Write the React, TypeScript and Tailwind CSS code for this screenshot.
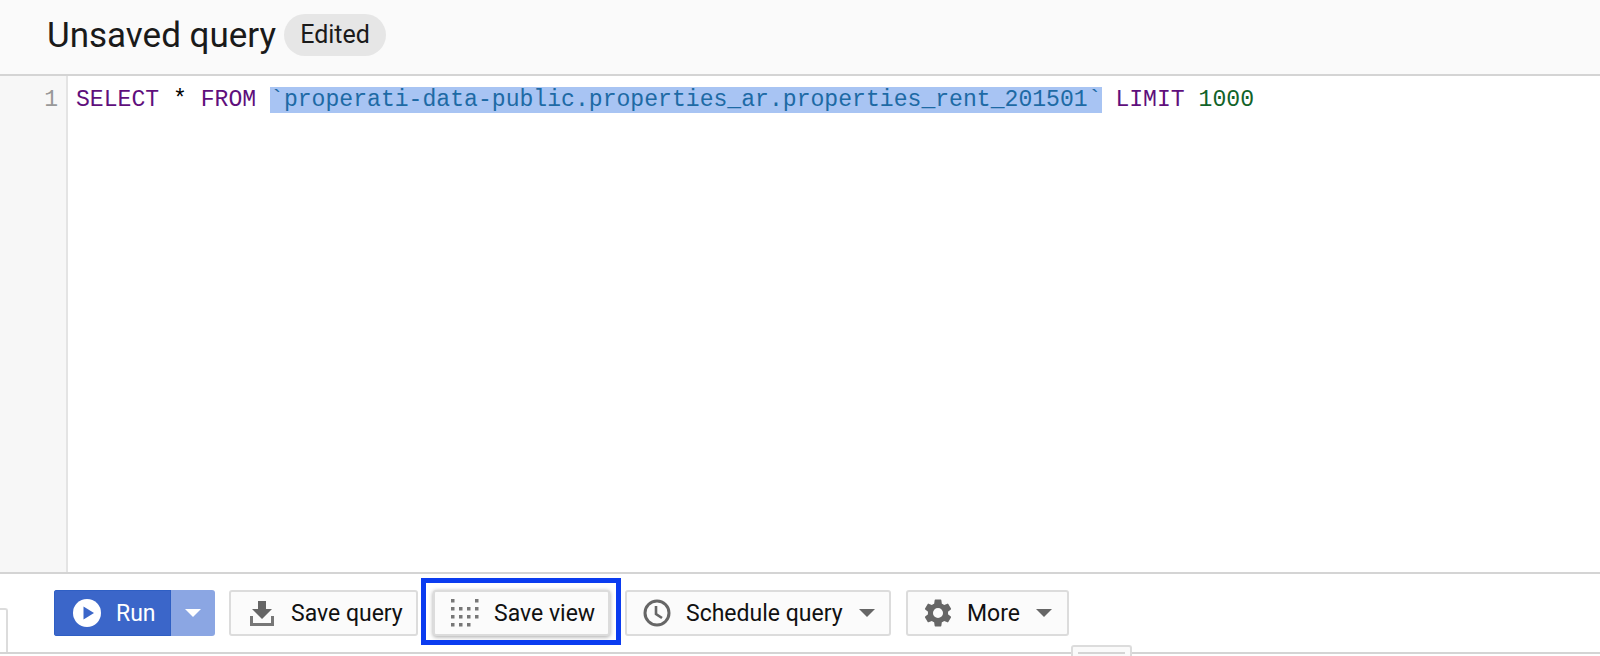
import React from "react";

const Caret = ({ cls }: { cls: string }) => (
  <svg width="16" height="8" viewBox="0 0 16 8" className={cls}>
    <path d="M0 0h16L8 8z" fill="currentColor" />
  </svg>
);

const Btn = ({ w, icon, label, caret, children, tight }: { w: string; icon: React.ReactNode; label: string; caret?: boolean; children?: React.ReactNode; tight?: boolean }) => (
  <div className={`relative flex h-[46px] items-center rounded-[3px] border-2 border-[#dcdcdc] bg-[#fbfbfb] text-[23px] text-[#111] ${tight ? "pl-[16px]" : "pl-[19px]"} ${w}`}>
    {icon}
    <span className={`whitespace-nowrap pt-[2px] ${tight ? "ml-[15px]" : "ml-[16px]"}`}>{label}</span>
    {caret && <Caret cls="ml-[16px] text-[#666]" />}
    {children}
  </div>
);

export default function App() {
  return (
    <div className="flex h-[656px] w-[1600px] flex-col overflow-hidden bg-white font-['Roboto',sans-serif]">
      <header className="flex h-[76px] shrink-0 items-center border-b-2 border-[#d4d4d4] bg-[#fafafa] pb-[4px] pl-[47px]">
        <h1 className="text-[35px] leading-none text-[#1a1a1a]">Unsaved query</h1>
        <span className="ml-[8px] flex h-[42px] w-[102px] items-center justify-center rounded-full bg-[#e6e6e6] text-[25px] text-[#1a1a1a]">Edited</span>
      </header>

      <main className="flex h-[498px] shrink-0 border-b-2 border-[#d4d4d4]">
        <div className="w-[68px] shrink-0 border-r-2 border-[#e4e4e4] bg-[#f7f7f7] pr-[8px] pt-[11px] text-right font-['Liberation_Mono',monospace] text-[23.1px] leading-[27px] text-[#999]">1</div>
        <div className="whitespace-pre pl-[8px] pt-[11px] font-['Liberation_Mono',monospace] text-[23.1px] leading-[27px] text-black">
          <span className="text-[#5f0f7c]">SELECT</span> * <span className="text-[#5f0f7c]">FROM</span>{" "}
          <span className="bg-[#a8c4f3] text-[#1d6aa5]">`properati-data-public.properties_ar.properties_rent_201501`</span>{" "}
          <span className="text-[#5f0f7c]">LIMIT</span> <span className="text-[#116329]">1000</span>
        </div>
      </main>

      <section className="relative flex h-[78px] shrink-0 items-center pl-[54px]">
        <div className="flex h-[46px] w-[161px] overflow-hidden rounded-[3px] text-white">
          <div className="flex w-[117px] items-center border border-[#2f5fc4] bg-[#3b66c9] pl-[18px]">
            <svg width="28" height="28" viewBox="0 0 28 28">
              <circle cx="14" cy="14" r="14" fill="#fff" />
              <path d="M10.5 7.5 21 14l-10.5 6.5z" fill="#3b66c9" />
            </svg>
            <span className="ml-[15px] pt-[2px] text-[23px]">Run</span>
          </div>
          <div className="flex flex-1 items-center justify-center bg-[#8ba6e3]">
            <Caret cls="text-white" />
          </div>
        </div>

        <div className="ml-[14px]">
          <Btn
            w="w-[189px]"
            label="Save query"
            icon={
              <svg width="24" height="25" viewBox="0 0 24 25" className="mr-[1px] shrink-0">
                <path d="M8 0h8v8h6l-10 10L2 8h6z" fill="#666" />
                <path d="M0 15h3v7h18v-7h3v10H0z" fill="#777" />
              </svg>
            }
          />
        </div>

        <div className="ml-[15px]">
          <Btn
            tight
            w="w-[177px] shadow-[0_1px_4px_rgba(0,0,0,0.35)]"
            label="Save view"
            icon={
              <svg width="28" height="28" viewBox="0 0 28 28" className="shrink-0" fill="#777">
                {[[0,0],[24,0],[0,8],[8,8],[16,8],[24,8],[0,16],[8,16],[16,16],[24,16],[0,24],[8,24],[16,24]].map(([x, y]) => (
                  <rect key={`${x}-${y}`} x={x} y={y} width="3.5" height="3.5" />
                ))}
              </svg>
            }
          >
            <span className="pointer-events-none absolute -left-[14px] -right-[13px] -top-[14px] -bottom-[11px] border-[5px] border-[#0b3cf0]" />
          </Btn>
        </div>

        <div className="ml-[15px]">
          <Btn
            tight
            w="w-[266px]"
            label="Schedule query"
            caret
            icon={
              <svg width="28" height="28" viewBox="0 0 28 28" className="shrink-0">
                <circle cx="14" cy="14" r="12" fill="none" stroke="#666" strokeWidth="3" />
                <path d="M13 7v8l6 4" fill="none" stroke="#666" strokeWidth="2.6" />
              </svg>
            }
          />
        </div>

        <div className="ml-[15px]">
          <Btn
            tight
            w="w-[163px]"
            label="More"
            caret
            icon={
              <svg width="28" height="28" viewBox="2 2 20 20" className="shrink-0">
                <path fill="#666" d="M19.14 12.94c.04-.3.06-.61.06-.94s-.02-.64-.07-.94l2.03-1.58a.49.49 0 0 0 .12-.61l-1.92-3.32a.49.49 0 0 0-.59-.22l-2.39.96a7 7 0 0 0-1.62-.94l-.36-2.54a.48.48 0 0 0-.48-.41h-3.84a.48.48 0 0 0-.47.41l-.36 2.54c-.59.24-1.13.57-1.62.94l-2.39-.96a.48.48 0 0 0-.59.22L2.74 8.87a.48.48 0 0 0 .12.61l2.03 1.58c-.05.3-.09.63-.09.94s.02.64.07.94l-2.03 1.58a.49.49 0 0 0-.12.61l1.92 3.32c.12.22.37.29.59.22l2.39-.96c.5.38 1.03.7 1.62.94l.36 2.54c.05.24.24.41.48.41h3.84c.24 0 .44-.17.47-.41l.36-2.54c.59-.24 1.13-.56 1.62-.94l2.39.96c.22.08.47 0 .59-.22l1.92-3.32a.48.48 0 0 0-.12-.61zM12 15.6A3.6 3.6 0 1 1 12 8.4a3.6 3.6 0 0 1 0 7.2z" />
              </svg>
            }
          />
        </div>

        <div className="absolute bottom-0 left-0 h-[44px] w-[8px] rounded-tr-[3px] border-r-2 border-t-2 border-[#dcdcdc]" />
      </section>

      <footer className="relative h-[4px] shrink-0 border-t-2 border-[#d4d4d4]">
        <div className="absolute left-[1071px] -top-[9px] h-[12px] w-[61px] rounded-t-[3px] border-2 border-b-0 border-[#dcdcdc] bg-[#fafafa]">
          <div className="mx-[5px] mt-[5px] h-[2px] bg-[#d4d4d4]" />
        </div>
      </footer>
    </div>
  );
}
